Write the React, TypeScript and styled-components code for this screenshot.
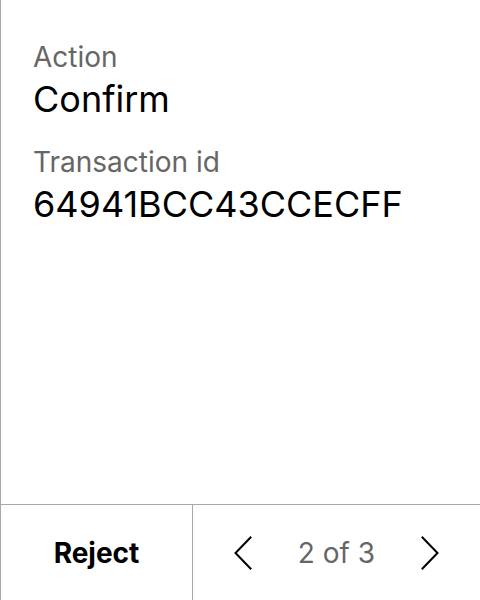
import React from "react";
import styled, { createGlobalStyle } from "styled-components";

const Global = createGlobalStyle`
  html, body { margin: 0; padding: 0; background: #fff; }
  body { font-family: Inter, "Noto Sans", sans-serif; }
  * { box-sizing: border-box; }
`;

const Screen = styled.div`
  width: 480px;
  height: 600px;
  display: flex;
  flex-direction: column;
  border-left: 1px solid #a8a8a8;
  background: #fff;
`;

const Body = styled.div`
  flex: 1;
  padding: 39px 0 0 32px;
  display: flex;
  flex-direction: column;
  gap: 21px;
`;

const Field = styled.div`
  display: flex;
  flex-direction: column;
`;

const Label = styled.div`
  font-size: 28px;
  line-height: 36px;
  color: #666;
`;

const Value = styled.div`
  font-size: 36px;
  line-height: 48px;
  color: #000;
`;

const Footer = styled.div`
  height: 96px;
  border-top: 1px solid #a8a8a8;
  display: grid;
  grid-template-columns: 192px 1fr;
`;

const RejectButton = styled.button`
  border: none;
  border-right: 1px solid #a8a8a8;
  background: none;
  font-family: inherit;
  font-weight: 700;
  font-size: 28px;
  color: #000;
  padding: 0;
`;

const Pager = styled.div`
  display: flex;
  align-items: center;
  justify-content: space-between;
  padding: 0 41px 0 41px;
`;

const Arrow = styled.button`
  border: none;
  background: none;
  padding: 0;
  width: 18px;
  height: 34px;
  display: flex;
  align-items: center;
  justify-content: center;
`;

const Count = styled.span`
  font-size: 28px;
  color: #666;
`;

const Chevron = ({ dir }: { dir: "left" | "right" }) => (
  <svg width="18" height="34" viewBox="0 0 18 34" fill="none">
    <path
      d={dir === "left" ? "M16.5 1.5 L1.5 17 L16.5 32.5" : "M1.5 1.5 L16.5 17 L1.5 32.5"}
      stroke="#000"
      strokeWidth="2"
      strokeLinecap="square"
      strokeLinejoin="miter"
    />
  </svg>
);

export default function App() {
  return (
    <>
      <Global />
      <Screen>
        <Body>
          <Field>
            <Label>Action</Label>
            <Value>Confirm</Value>
          </Field>
          <Field>
            <Label>Transaction id</Label>
            <Value>64941BCC43CCECFF</Value>
          </Field>
        </Body>
        <Footer>
          <RejectButton>Reject</RejectButton>
          <Pager>
            <Arrow aria-label="Previous">
              <Chevron dir="left" />
            </Arrow>
            <Count>2 of 3</Count>
            <Arrow aria-label="Next">
              <Chevron dir="right" />
            </Arrow>
          </Pager>
        </Footer>
      </Screen>
    </>
  );
}
